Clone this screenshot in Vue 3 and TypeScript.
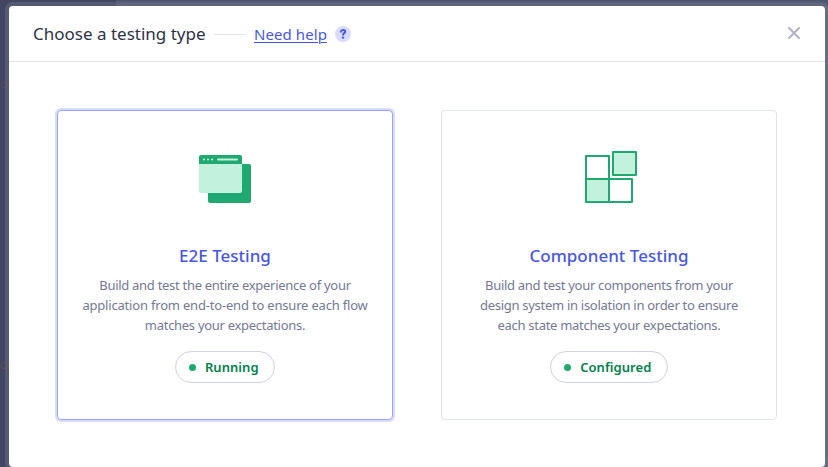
<script setup lang="ts">
interface TestingType {
  id: string
  title: string
  lines: string[]
  status: string
  active: boolean
}

const types: TestingType[] = [
  {
    id: 'e2e',
    title: 'E2E Testing',
    lines: [
      'Build and test the entire experience of your',
      'application from end-to-end to ensure each flow',
      'matches your expectations.',
    ],
    status: 'Running',
    active: true,
  },
  {
    id: 'component',
    title: 'Component Testing',
    lines: [
      'Build and test your components from your',
      'design system in isolation in order to ensure',
      'each state matches your expectations.',
    ],
    status: 'Configured',
    active: false,
  },
]
</script>

<template>
  <div class="backdrop">
    <span class="ghost ghost-top">ou</span>
    <span class="ghost ghost-bottom">co</span>
    <section class="modal">
      <header class="header">
        <h2 class="title">Choose a testing type</h2>
        <span class="rule"></span>
        <a class="help" href="#">Need help</a>
        <span class="question">
          <svg width="16" height="16" viewBox="0 0 16 16" fill="none">
            <circle cx="8" cy="8" r="8" fill="#dadcfe" />
            <path
              d="M5.9 5.7C6.1 4.5 6.9 4 8 4c1.3 0 2.2.7 2.2 1.8 0 1.4-2.1 1.4-2.1 3"
              stroke="#4956e3"
              stroke-width="2"
              stroke-linecap="round"
            />
            <circle cx="8" cy="11.6" r="1.2" fill="#4956e3" />
          </svg>
        </span>
        <button class="close" aria-label="Close">
          <svg width="12" height="12" viewBox="0 0 12 12">
            <path d="M1 1l10 10M11 1L1 11" stroke="#afb3c7" stroke-width="2" stroke-linecap="round" />
          </svg>
        </button>
      </header>
      <main class="cards">
        <article v-for="t in types" :key="t.id" class="card" :class="[t.id, { active: t.active }]">
          <svg v-if="t.id === 'e2e'" class="icon" width="64" height="64" viewBox="0 0 64 64">
            <rect x="15" y="18" width="43" height="39" rx="2" fill="#1fa971" />
            <path d="M6 17h43v28a2 2 0 0 1-2 2H8a2 2 0 0 1-2-2z" fill="#c2f1de" />
            <path d="M6 18v-7a2 2 0 0 1 2-2h39a2 2 0 0 1 2 2v7z" fill="#1fa971" />
            <path
              d="M11 13.5h.01M15 13.5h.01M19 13.5h.01M25 13.5h19"
              stroke="#c2f1de"
              stroke-width="2"
              stroke-linecap="round"
            />
          </svg>
          <svg v-else class="icon" width="64" height="64" viewBox="0 0 64 64">
            <g stroke="#1fa971" stroke-width="2" stroke-linejoin="round">
              <path d="M9 10h23v23H9z" fill="#fff" />
              <path d="M9 33h23v23H9z" fill="#c2f1de" />
              <path d="M32 33h23v23H32z" fill="#fff" />
              <path d="M36 6h23v23H36z" fill="#c2f1de" />
            </g>
          </svg>
          <h3 class="name">{{ t.title }}</h3>
          <p class="description">
            <span v-for="line in t.lines" :key="line" class="line">{{ line }}</span>
          </p>
          <div class="status"><i class="dot"></i><span>{{ t.status }}</span></div>
        </article>
      </main>
    </section>
  </div>
</template>

<style>
body {
  overflow: hidden;
}
</style>

<style scoped>
.backdrop {
  position: relative;
  box-sizing: border-box;
  width: 828px;
  height: 467px;
  padding: 6px 3px 0 9px;
  overflow: hidden;
  background:
    linear-gradient(#50566e, #50566e) 116px 0 / 712px 6px no-repeat,
    linear-gradient(#5b6179, #5b6179) 820px 0 / 8px 467px no-repeat,
    #434660;
  font-family: "Noto Sans", "Open Sans", sans-serif;
}
.ghost {
  position: absolute;
  left: 0;
  color: #55485f;
  font-size: 13px;
  line-height: 20px;
}
.ghost-top {
  top: 73px;
}
.ghost-bottom {
  top: 354px;
}
.modal {
  position: relative;
  box-sizing: border-box;
  height: 461px;
  background: #fff;
  border-radius: 4px;
  box-shadow: 0 0 0 4px rgba(144, 149, 173, 0.25);
}
.header {
  display: flex;
  align-items: center;
  box-sizing: border-box;
  height: 56px;
  padding: 0 24px;
  border-bottom: 1px solid #e1e3ed;
}
.title {
  margin: 0;
  width: 173px;
  color: #2e3247;
  font-size: 17px;
  font-weight: 400;
  line-height: 24px;
  white-space: nowrap;
}
.rule {
  width: 32px;
  height: 1px;
  margin: 1px 8px 0;
  background: #e1e3ed;
}
.help {
  width: 73px;
  color: #4956e3;
  font-size: 15px;
  line-height: 24px;
  letter-spacing: 0.08px;
  white-space: nowrap;
  text-decoration: underline;
  text-decoration-thickness: 1px;
  text-underline-offset: 2px;
}
.question {
  display: flex;
  margin-left: 8px;
}
.close {
  display: flex;
  margin: 0 1px 1px auto;
  padding: 0;
  border: 0;
  background: none;
}
.cards {
  display: grid;
  grid-template-columns: 336px 336px;
  gap: 48px;
  padding: 48px;
}
.card {
  display: flex;
  flex-direction: column;
  align-items: center;
  box-sizing: border-box;
  height: 310px;
  padding-top: 35px;
  border: 1px solid #e1e3ed;
  border-radius: 4px;
}
.card.active {
  border-color: #9aa2fc;
  box-shadow: 0 0 0 2px #dadcfe;
}
.icon {
  display: block;
}
.name {
  margin: 34px 0 0;
  color: #4956e3;
  font-size: 17px;
  font-weight: 500;
  line-height: 24px;
}
.description {
  margin: 7px 0 0;
  color: #747994;
  font-size: 13px;
  line-height: 20px;
  letter-spacing: -0.29px;
  text-align: center;
  white-space: nowrap;
}
.line {
  display: block;
}
.e2e .line:nth-child(2) {
  letter-spacing: -0.19px;
}
.status {
  display: flex;
  align-items: center;
  box-sizing: border-box;
  height: 32px;
  margin-top: 16px;
  padding: 0 15.5px 0 13px;
  border: 1px solid #d0d2e0;
  border-radius: 16px;
  color: #00814d;
  font-size: 13px;
  font-weight: 600;
  letter-spacing: 0.05px;
}
.dot {
  width: 7px;
  height: 7px;
  margin-right: 9px;
  border-radius: 50%;
  background: #1fa971;
}
</style>
